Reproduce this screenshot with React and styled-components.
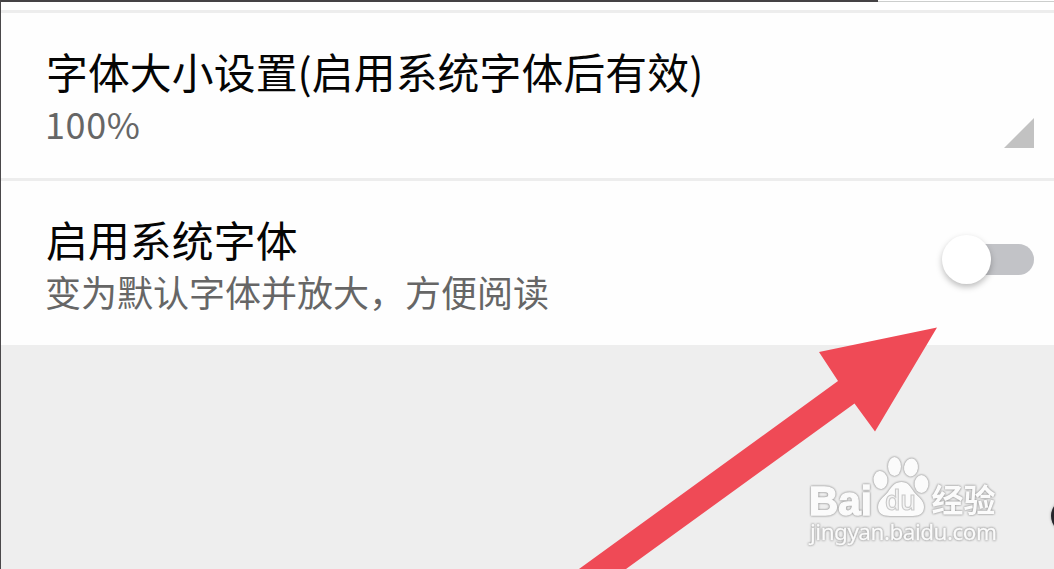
import React, { useState } from "react";
import styled, { createGlobalStyle } from "styled-components";

const App = () => {
  const [enabled, setEnabled] = useState(false);

  return (
    <>
      <GlobalStyle />
      <Screen>
        <TopStrip>
          <TopStripDark />
          <TopStripLight />
        </TopStrip>
        <TopGap />
        <Divider />
        <SettingRow $height={165}>
          <Texts>
            <Title>字体大小设置(启用系统字体后有效)</Title>
            <Summary $wide>100%</Summary>
          </Texts>
          <Corner />
        </SettingRow>
        <Divider />
        <SettingRow $height={164}>
          <Texts>
            <Title>启用系统字体</Title>
            <Summary>变为默认字体并放大，方便阅读</Summary>
          </Texts>
          <Switch
            role="switch"
            aria-checked={enabled}
            onClick={() => setEnabled((prev) => !prev)}
          >
            <Thumb $on={enabled} />
          </Switch>
        </SettingRow>
        <Arrow viewBox="0 0 364 259">
          <path d="M360 17.500L298 121.500L277.500 93.500L49 259L2 259L261 71L242 42Z" />
        </Arrow>
        <Watermark />
        <FloatingDot />
      </Screen>
    </>
  );
};

const Watermark = () => (
  <WatermarkSvg viewBox="0 0 214 104">
    <LogoText x="9" y="65" fontSize="41" textLength="63" lengthAdjust="spacingAndGlyphs">
      Bai
    </LogoText>
    <ellipse cx="80.500" cy="30" rx="7" ry="9" transform="rotate(-8 80.500 30)" />
    <ellipse cx="94.500" cy="16.500" rx="6.500" ry="9.500" />
    <ellipse cx="111" cy="17.500" rx="7" ry="9" transform="rotate(8 111 17.500)" />
    <ellipse cx="121.500" cy="34" rx="7" ry="9" />
    <path d="M101.500 32C108 32 110 36 114 42C118 47 124 50 124 57C124 63 120 66 113 66L90 66C82 66 78 63 78 57C78 50 84 47 88 42C92 36 95 32 101.500 32Z" />
    <DuText x="85" y="60" fontSize="27" textLength="31" lengthAdjust="spacingAndGlyphs">
      du
    </DuText>
    <HanText x="131.500" y="62" fontSize="32" textLength="64">
      经验
    </HanText>
    <UrlText x="10" y="90" fontSize="22.500" textLength="187">
      jingyan.baidu.com
    </UrlText>
  </WatermarkSvg>
);

export default App;

const GlobalStyle = createGlobalStyle`
  body {
    margin: 0;
    overflow: hidden;
    font-family: "Noto Sans CJK SC", sans-serif;
  }
`;

const Screen = styled.div`
  position: relative;
  box-sizing: border-box;
  display: flex;
  flex-direction: column;
  width: 1054px;
  height: 569px;
  overflow: hidden;
  background: #eeeeee;
  border-left: 1px solid #4a484a;
`;

const TopStrip = styled.div`
  display: flex;
  height: 2px;
  background: #ffffff;
`;

const TopStripDark = styled.div`
  width: 877px;
  background: #454345;
`;

const TopStripLight = styled.div`
  flex: 1;
  box-sizing: border-box;
  border-bottom: 1px solid #cccecd;
`;

const TopGap = styled.div`
  height: 8px;
  background: #ffffff;
`;

const Divider = styled.div`
  height: 3px;
  background: #ededed;
`;

const SettingRow = styled.div`
  box-sizing: border-box;
  display: flex;
  justify-content: space-between;
  height: ${(props) => props.$height}px;
  padding: 32px 20px 0 45px;
  background: #fefefe;
`;

const Texts = styled.div`
  display: flex;
  flex-direction: column;
`;

const Title = styled.div`
  font-size: 41.8px;
  line-height: 52px;
  letter-spacing: 0.13px;
  color: #050505;
  white-space: nowrap;
`;

const Summary = styled.div`
  margin: 2px 0 0 -1px;
  font-size: 36px;
  line-height: 48px;
  letter-spacing: ${(props) => (props.$wide ? "0.6px" : "0")};
  color: #666666;
  white-space: nowrap;
`;

const Corner = styled.div`
  width: 30px;
  height: 30px;
  margin-top: 73px;
  background: #c2c2c2;
  clip-path: polygon(100% 0, 100% 100%, 0 100%);
`;

const Switch = styled.button`
  display: flex;
  align-items: center;
  width: 84px;
  height: 31px;
  margin-top: 31px;
  padding: 0;
  border: none;
  border-radius: 16px;
  background: #c2c3c7;
`;

const Thumb = styled.span`
  flex: none;
  width: 49px;
  height: 49px;
  margin-left: ${(props) => (props.$on ? "44px" : "-8px")};
  border-radius: 50%;
  background: #ffffff;
  box-shadow: 0 3px 6px rgba(0, 0, 0, 0.26);
`;

const Arrow = styled.svg`
  position: absolute;
  left: 576px;
  top: 310px;
  width: 364px;
  height: 259px;
  fill: #ef4a56;
`;

const WatermarkSvg = styled.svg`
  position: absolute;
  left: 799px;
  top: 450px;
  width: 214px;
  height: 104px;
  fill: #fbfbfb;
  filter: drop-shadow(0 0 0.8px #8c8c8c) drop-shadow(0 0 0.5px #c4c4c4);
`;

const LogoText = styled.text`
  font-family: "Liberation Sans", sans-serif;
  font-weight: 700;
  stroke: #fbfbfb;
  stroke-width: 1.4px;
`;

const DuText = styled.text`
  font-family: "Open Sans", sans-serif;
  font-weight: 600;
  fill: #f4f4f4;
  stroke: #cacaca;
  stroke-width: 1.2px;
`;

const HanText = styled.text`
  font-family: "Noto Sans CJK SC", sans-serif;
  font-weight: 700;
`;

const UrlText = styled.text`
  font-family: "Noto Sans", sans-serif;
  stroke: #fbfbfb;
  stroke-width: 0.3px;
`;

const FloatingDot = styled.div`
  position: absolute;
  left: 1050px;
  top: 499px;
  width: 34px;
  height: 34px;
  border-radius: 50%;
  background: #25252b;
  box-shadow: 0 0 3px rgba(0, 0, 0, 0.3);
`;
